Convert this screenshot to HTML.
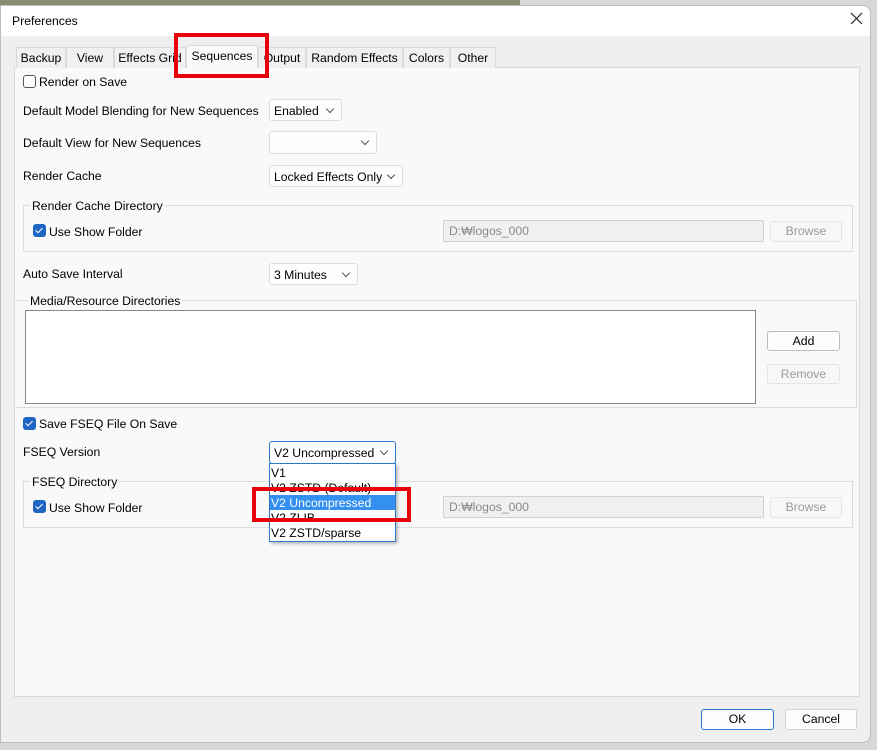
<!DOCTYPE html>
<html><head><style>
*{box-sizing:border-box}
body{margin:0;width:877px;height:750px;overflow:hidden;background:#d8d8d8;font-family:"Liberation Sans","Noto Sans CJK KR",sans-serif;font-size:12.2px;color:#000;position:relative}
.a{position:absolute}
.t{position:absolute;white-space:nowrap;line-height:14px;margin-top:1px}
.sel{position:absolute;background:#fdfdfd;border:1px solid #dcdcdc;border-radius:3px;padding:1px 0 0 4px;line-height:20px}
.sel:after{content:"";position:absolute;right:8px;top:6px;width:5px;height:5px;border-right:1px solid #555;border-bottom:1px solid #555;transform:rotate(45deg)}
.cb{position:absolute;width:13px;height:13px;border:1px solid #555;border-radius:3px;background:#fff}
.cbk{position:absolute;width:13px;height:13px;border-radius:3px;background:#1f66c2}
.cbk:after{content:"";position:absolute;left:4px;top:2px;width:3px;height:6px;border-right:1.5px solid #fff;border-bottom:1.5px solid #fff;transform:rotate(45deg)}
.grp{position:absolute;border:1px solid #dcdcdc}
.gl{position:absolute;background:#f9f9f9;padding:0 2px;line-height:14px;margin-top:1px}
.btn{position:absolute;border:1px solid #d0d0d0;border-radius:3px;background:#fdfdfd;text-align:center;line-height:19px}
.dis{color:#9a9a9a;background:#f7f7f7;border-color:#e5e5e5}
.fld{position:absolute;border:1px solid #cfcfcf;border-radius:2px;background:#f0f0f0;color:#8a8a8a;padding-left:5px;line-height:21px}
.tab{position:absolute;top:47px;height:21px;border:1px solid #dadada;border-bottom:none;background:#f0f0f0;line-height:21px;text-align:center}
.red{position:absolute;border:4px solid #e8000b}
</style></head><body>
<div class="a" style="left:0;top:0;width:520px;height:5px;background:#8a8a70"></div>
<div class="a" style="left:0;top:5px;width:871px;height:738px;background:#efefef;border:1px solid #bdbdbd;border-radius:0 8px 8px 0"></div>
<div class="a" style="left:1px;top:6px;width:869px;height:30px;background:#fff;border-radius:0 8px 0 0"></div>
<div class="t" style="left:12px;top:13px">Preferences</div>
<svg class="a" style="left:850px;top:12px" width="13" height="13"><path d="M1 1L12 12M12 1L1 12" stroke="#222" stroke-width="1.2"/></svg>
<div class="a" style="left:14px;top:67px;width:846px;height:630px;background:#f9f9f9;border:1px solid #d9d9d9"></div>
<div class="tab" style="left:16px;width:50px">Backup</div>
<div class="tab" style="left:66px;width:48px">View</div>
<div class="tab" style="left:114px;width:72px">Effects Grid</div>
<div class="tab" style="left:186px;width:72px;top:45px;height:23px;background:#f9f9f9">Sequences</div>
<div class="tab" style="left:258px;width:48px">Output</div>
<div class="tab" style="left:306px;width:97px">Random Effects</div>
<div class="tab" style="left:403px;width:47px">Colors</div>
<div class="tab" style="left:450px;width:46px">Other</div>
<div class="red" style="left:174px;top:33px;width:95px;height:45px"></div>

<div class="cb" style="left:23px;top:75px"></div><div class="t" style="left:39px;top:74px">Render on Save</div>
<div class="t" style="left:23px;top:103px">Default Model Blending for New Sequences</div>
<div class="sel" style="left:269px;top:99px;width:73px;height:22px">Enabled</div>
<div class="t" style="left:23px;top:135px">Default View for New Sequences</div>
<div class="sel" style="left:269px;top:131px;width:108px;height:23px"></div>
<div class="t" style="left:23px;top:168px">Render Cache</div>
<div class="sel" style="left:269px;top:165px;width:134px;height:22px">Locked Effects Only</div>

<div class="grp" style="left:23px;top:205px;width:830px;height:47px"></div>
<div class="gl" style="left:30px;top:198px">Render Cache Directory</div>
<div class="cbk" style="left:33px;top:224px"></div><div class="t" style="left:49px;top:224px">Use Show Folder</div>
<div class="fld" style="left:443px;top:220px;width:321px;height:22px">D:₩logos_000</div>
<div class="btn dis" style="left:770px;top:221px;width:72px;height:21px">Browse</div>

<div class="t" style="left:23px;top:266px">Auto Save Interval</div>
<div class="sel" style="left:269px;top:263px;width:89px;height:22px">3 Minutes</div>

<div class="grp" style="left:14px;top:300px;width:843px;height:108px"></div>
<div class="gl" style="left:28px;top:293px">Media/Resource Directories</div>
<div class="a" style="left:25px;top:310px;width:731px;height:94px;background:#fff;border:1px solid #828790"></div>
<div class="btn" style="left:767px;top:331px;width:73px;height:20px;border-color:#bcbcbc">Add</div>
<div class="btn dis" style="left:767px;top:364px;width:73px;height:20px">Remove</div>

<div class="cbk" style="left:23px;top:417px"></div><div class="t" style="left:39px;top:416px">Save FSEQ File On Save</div>
<div class="t" style="left:23px;top:444px">FSEQ Version</div>
<div class="sel" style="left:269px;top:441px;width:127px;height:23px;border-color:#2b79c9;background:#fff">V2 Uncompressed</div>

<div class="grp" style="left:23px;top:481px;width:830px;height:47px"></div>
<div class="gl" style="left:30px;top:474px">FSEQ Directory</div>
<div class="cbk" style="left:33px;top:500px"></div><div class="t" style="left:49px;top:500px">Use Show Folder</div>
<div class="fld" style="left:443px;top:496px;width:321px;height:22px">D:₩logos_000</div>
<div class="btn dis" style="left:770px;top:497px;width:72px;height:21px">Browse</div>

<div class="a" style="left:269px;top:463px;width:127px;height:79px;background:#fff;border:1px solid #2b79c9;box-shadow:2px 2px 3px rgba(0,0,0,.25)"></div>
<div class="t" style="left:271px;top:465px">V1</div>
<div class="t" style="left:271px;top:480px">V2 ZSTD (Default)</div>
<div class="a" style="left:270px;top:495px;width:125px;height:15px;background:#3390f0"></div>
<div class="t" style="left:271px;top:495px;color:#fff">V2 Uncompressed</div>
<div class="t" style="left:271px;top:510px">V2 ZLIB</div>
<div class="t" style="left:271px;top:525px">V2 ZSTD/sparse</div>
<div class="red" style="left:252px;top:487px;width:159px;height:35px"></div>

<div class="btn" style="left:701px;top:709px;width:73px;height:21px;border-color:#2b79c9">OK</div>
<div class="btn" style="left:785px;top:709px;width:72px;height:21px">Cancel</div>
</body></html>
